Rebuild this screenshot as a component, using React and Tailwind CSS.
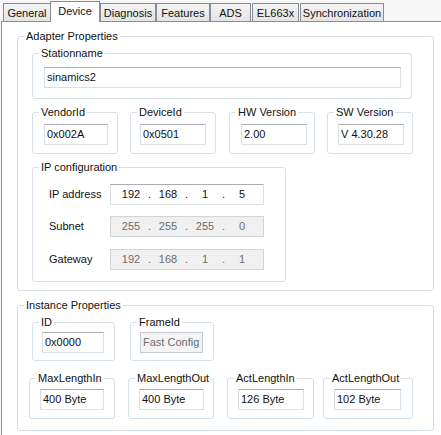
import React from "react";

const tabs = [
  { label: "General", cls: "w-[48px]" },
  { label: "Device", cls: "w-[50px] -ml-px", active: true },
  { label: "Diagnosis", cls: "w-[56px]" },
  { label: "Features", cls: "w-[54px]" },
  { label: "ADS", cls: "w-[41px]" },
  { label: "EL663x", cls: "ml-[1px] w-[47px]" },
  { label: "Synchronization", cls: "ml-[1px] w-[84px]" },
];

const Group = ({ label, className = "", children }) => (
  <fieldset className={`rounded-[3px] border border-[#d5dfe5] ${className}`}>
    <legend className="ml-[6px] px-[2px] font-normal leading-[13px]">{label}</legend>
    {children}
  </fieldset>
);

const Box = ({ children, className = "", disabled }) => (
  <div
    className={`flex h-[21px] items-center border pl-[2px] ${
      disabled
        ? "border-[#c6c9ce] bg-[#f4f4f4] text-[#6d6d6d]"
        : "border-[#dadee5] border-t-[#abadb3] bg-white"
    } ${className}`}
  >
    {children}
  </div>
);

const IpRow = ({ label, parts, disabled, className = "" }) => (
  <div className={`flex items-center ${className}`}>
    <span className="w-[61px]">{label}</span>
    <div
      className={`flex h-[21px] w-[154px] items-center border pl-[5px] ${
        disabled
          ? "border-[#d0d3d8] bg-[#f0f0f0] text-[#6d6d6d]"
          : "border-[#dadee5] border-t-[#abadb3] bg-white"
      }`}
    >
      {parts.map((p, i) => (
        <React.Fragment key={i}>
          {i > 0 && <span className="w-[7px] text-center">.</span>}
          <span className="w-[30px] text-center">{p}</span>
        </React.Fragment>
      ))}
    </div>
  </div>
);

export default function App() {
  return (
    <div className="h-[435px] w-[441px] overflow-hidden bg-[#f7f7f7] font-['Liberation_Sans',Arial,sans-serif] text-[11px] font-normal text-[#111]">
      <div className="flex h-[21px] items-end pl-[3px]">
        {tabs.map((t) =>
          t.active ? (
            <div
              key={t.label}
              className={`relative z-10 -mb-px h-[21px] border border-b-0 border-[#898c95] bg-white text-center leading-[19px] ${t.cls}`}
            >
              {t.label}
            </div>
          ) : (
            <div
              key={t.label}
              className={`h-[18px] border border-b-0 border-[#898c95] bg-linear-to-b from-[#f4f4f4] to-[#e4e4e4] pt-[1px] text-center leading-[16px] ${t.cls}`}
            >
              {t.label}
            </div>
          )
        )}
      </div>

      <div className="ml-[1px] h-[414px] w-[470px] border-l border-t border-[#898c95] bg-white pl-[15px] pt-[8px]">
        <Group label="Adapter Properties" className="w-[417px]">
          <div className="pb-[8px] pl-[14px] pt-[4px]">
            <Group label="Stationname" className="w-[380px]">
              <div className="pb-[10px] pl-[11px] pt-[7px]">
                <Box className="w-[357px]">sinamics2</Box>
              </div>
            </Group>

            <div className="mt-[7px] flex">
              <Group label="VendorId" className="w-[86px]">
                <div className="pb-[8px] pl-[11px] pt-[5px]">
                  <Box className="w-[64px]">0x002A</Box>
                </div>
              </Group>
              <Group label="DeviceId" className="ml-[12px] w-[86px]">
                <div className="pb-[8px] pl-[9px] pt-[5px]">
                  <Box className="w-[66px]">0x0501</Box>
                </div>
              </Group>
              <Group label="HW Version" className="ml-[13px] w-[86px]">
                <div className="pb-[8px] pl-[11px] pt-[5px]">
                  <Box className="w-[66px]">2.00</Box>
                </div>
              </Group>
              <Group label="SW Version" className="ml-[12px] w-[86px]">
                <div className="pb-[8px] pl-[10px] pt-[5px]">
                  <Box className="w-[66px]">V 4.30.28</Box>
                </div>
              </Group>
            </div>

            <Group label="IP configuration" className="mt-[7px] w-[254px]">
              <div className="pb-[11px] pl-[16px] pt-[10px]">
                <IpRow label="IP address" parts={["192", "168", "1", "5"]} />
                <IpRow label="Subnet" parts={["255", "255", "255", "0"]} disabled className="mt-[11px]" />
                <IpRow label="Gateway" parts={["192", "168", "1", "1"]} disabled className="mt-[12px]" />
              </div>
            </Group>
          </div>
        </Group>

        <Group label="Instance Properties" className="mt-[8px] w-[417px]">
          <div className="pb-[11px] pl-[11px] pt-[4px]">
            <div className="flex">
              <Group label="ID" className="ml-[3px] w-[83px]">
                <div className="pb-[7px] pl-[9px] pt-[3px]">
                  <Box className="w-[62px]">0x0000</Box>
                </div>
              </Group>
              <Group label="FrameId" className="ml-[15px] w-[84px]">
                <div className="pb-[7px] pl-[9px] pt-[3px]">
                  <Box className="w-[63px]" disabled>Fast Config</Box>
                </div>
              </Group>
            </div>

            <div className="mt-[11px] flex">
              <Group label="MaxLengthIn" className="w-[86px]">
                <div className="pb-[8px] pl-[10px] pt-[4px]">
                  <Box className="w-[64px]">400 Byte</Box>
                </div>
              </Group>
              <Group label="MaxLengthOut" className="ml-[13px] w-[86px]">
                <div className="pb-[8px] pl-[10px] pt-[4px]">
                  <Box className="w-[65px]">400 Byte</Box>
                </div>
              </Group>
              <Group label="ActLengthIn" className="ml-[13px] w-[87px]">
                <div className="pb-[8px] pl-[10px] pt-[4px]">
                  <Box className="w-[66px]">126 Byte</Box>
                </div>
              </Group>
              <Group label="ActLengthOut" className="ml-[9px] w-[90px]">
                <div className="pb-[8px] pl-[10px] pt-[4px]">
                  <Box className="w-[67px]">102 Byte</Box>
                </div>
              </Group>
            </div>
          </div>
        </Group>
      </div>
    </div>
  );
}
